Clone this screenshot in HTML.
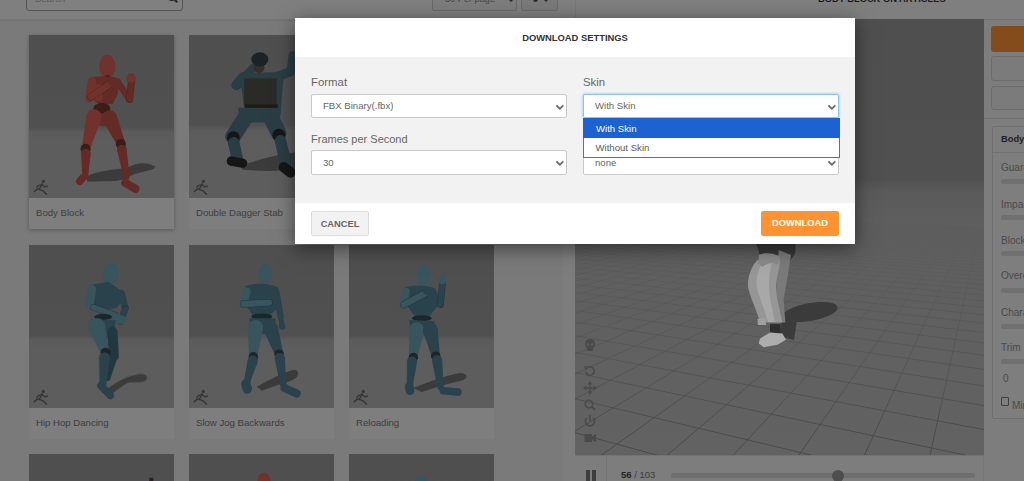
<!DOCTYPE html>
<html><head><meta charset="utf-8">
<style>
*{box-sizing:border-box;margin:0;padding:0}
html,body{width:1024px;height:481px;overflow:hidden;background:#7a7a7a;font-family:"Liberation Sans",sans-serif;position:relative}
.abs{position:absolute}
.card{position:absolute;width:145px;background:#7e7e7e}
.card .img{position:absolute;left:0;top:0;width:145px;height:163px;background:#505050;overflow:hidden}
.card .floor{position:absolute;left:0;width:145px;bottom:0;background:#5d5d5d}
.card .lbl{position:absolute;left:7px;top:172px;font-size:9.6px;color:#3d3d3d;white-space:nowrap}
#modal{left:295px;top:18px;width:560px;height:226px;background:#fff;box-shadow:0 4px 18px rgba(0,0,0,.5)}
#mhead{position:absolute;left:0;top:0;width:560px;height:39px;text-align:center;font-weight:bold;font-size:9.4px;color:#333;line-height:39px}
#mbody{position:absolute;left:0;top:39px;width:560px;height:146px;background:#f2f2f2}
.flabel{position:absolute;font-size:11.4px;color:#666}
.sel{position:absolute;height:23px;background:#fff;border:1px solid #c9c9c9;border-radius:2px;font-size:9.6px;color:#666;line-height:21px;padding-left:11px;white-space:nowrap}
.chev{position:absolute;right:3px;top:8px}
.btn{position:absolute;height:25px;border-radius:2px;font-weight:bold;font-size:9.3px;text-align:center;line-height:25px}
.rlbl{position:absolute;left:1001px;font-size:10px;color:#4a4a4a;white-space:nowrap}
.trk{position:absolute;left:1001px;width:40px;height:5px;border-radius:3px;background:#707070}
</style></head><body>
<svg width="0" height="0" style="position:absolute"><defs><filter id="blr" x="-10%" y="-10%" width="120%" height="120%"><feGaussianBlur stdDeviation="1.6"/></filter><filter id="blr2" x="-10%" y="-10%" width="120%" height="120%"><feGaussianBlur stdDeviation="0.6"/></filter></defs></svg>
<!-- header -->
<div class="abs" style="left:0;top:0;width:1024px;height:20px;background:#7f7f7f;border-bottom:1px solid #747474;box-shadow:0 1px 1px rgba(0,0,0,.05)"></div>
<div class="abs" style="left:26px;top:-9px;width:157px;height:20px;border:1px solid #555;border-radius:3px;background:#808080"></div>
<div class="abs" style="left:35px;top:-7.5px;font-size:9.5px;color:#5a5a5a">Search</div>
<svg class="abs" style="left:167px;top:-8px" width="12" height="12"><circle cx="4.5" cy="4.5" r="3.6" fill="none" stroke="#222" stroke-width="1.7"/><path d="M7.2,7.2 L10.2,10.2" stroke="#222" stroke-width="2"/></svg>
<div class="abs" style="left:432px;top:-9px;width:85px;height:20px;border:1px solid #6a6a6a;border-radius:2px;background:#7d7d7d"></div>
<div class="abs" style="left:445px;top:-6px;font-size:9.2px;color:#484848">30 Per page</div>
<div class="abs" style="left:508px;top:-1.5px;width:0;height:0;border-left:3px solid transparent;border-right:3px solid transparent;border-top:3px solid #2a2a2a"></div>
<div class="abs" style="left:521px;top:-9px;width:37px;height:20px;border:1px solid #6a6a6a;border-radius:2px;background:#7a7a7a"></div>
<div class="abs" style="left:532.5px;top:-5px;width:5px;height:7px;border-radius:50%;background:#2a2a2a"></div>
<div class="abs" style="left:543px;top:-1.5px;width:0;height:0;border-left:3px solid transparent;border-right:3px solid transparent;border-top:3px solid #2a2a2a"></div>
<div class="abs" style="left:575px;top:0;width:1px;height:19px;background:#767676"></div>
<div class="abs" style="left:818px;top:-6.5px;font-size:9.3px;font-weight:bold;color:#1a1a1a;white-space:nowrap">BODY BLOCK ON ARTICLES</div>

<!-- cards -->
<div class="card" style="left:29px;top:35px;height:194px;box-shadow:0 1px 4px rgba(0,0,0,.28);"><div class="img" style="background:linear-gradient(#4f4f4f 0px,#505050 92px,#5b5b5b 97px,#5d5d5d 106px,#5d5d5d 163px)"><svg width="145" height="163" viewBox="0 0 145 163" style="position:absolute;left:0;top:0"><g transform="scale(0.33879,0.33888)"><g filter="url(#blr)"><path d="M170,418 C200,400 250,398 290,392 C312,378 345,372 372,388 C372,398 350,400 335,404 C300,410 290,425 262,430 C230,432 205,432 172,432 Z" fill="#373737" opacity=".9"/><ellipse cx="231" cy="93" rx="24" ry="35" fill="#71322d"/><line x1="232" y1="125" x2="234" y2="138" stroke="#3a1b19" stroke-width="14" stroke-linecap="round"/><path d="M176,128 C200,118 245,120 266,130 L262,172 L248,202 L210,208 L184,186 Z" fill="#632a26"/><ellipse cx="205" cy="170" rx="22" ry="26" fill="#71322d"/><ellipse cx="237" cy="178" rx="20" ry="22" fill="#632a26"/><line x1="186" y1="136" x2="178" y2="186" stroke="#71322d" stroke-width="25" stroke-linecap="round"/><line x1="183" y1="183" x2="245" y2="141" stroke="#3a1b19" stroke-width="22" stroke-opacity=".6" stroke-linecap="round"/><line x1="183" y1="183" x2="245" y2="141" stroke="#71322d" stroke-width="19" stroke-linecap="round"/><circle cx="249" cy="138" r="14" fill="#632a26"/><line x1="262" y1="138" x2="296" y2="190" stroke="#632a26" stroke-width="19" stroke-linecap="round"/><line x1="297" y1="190" x2="303" y2="132" stroke="#3a1b19" stroke-width="21" stroke-opacity=".6" stroke-linecap="round"/><line x1="297" y1="190" x2="303" y2="132" stroke="#632a26" stroke-width="18" stroke-linecap="round"/><circle cx="301" cy="127" r="14" fill="#71322d"/><ellipse cx="215" cy="218" rx="25" ry="17" fill="#3a1b19"/><path d="M176,226 C200,232 235,232 252,230 L250,252 L222,270 L195,265 L178,246 Z" fill="#632a26"/><path d="M169.8,236.2 L157.4,322.7 L182.6,329.3 L214.2,247.8 Z" fill="#71322d"/><circle cx="192" cy="242" r="23.0" fill="#71322d"/><circle cx="170" cy="326" r="13.0" fill="#71322d"/><circle cx="167" cy="336" r="15" fill="#3a1b19"/><path d="M154.0,349.5 L157.0,411.7 L175.0,412.3 L182.0,350.5 Z" fill="#632a26"/><circle cx="168" cy="350" r="14.0" fill="#632a26"/><circle cx="166" cy="412" r="9.0" fill="#632a26"/><line x1="162" y1="418" x2="150" y2="432" stroke="#632a26" stroke-width="22" stroke-linecap="round"/><path d="M217.9,252.9 L258.1,321.3 L281.9,310.7 L258.1,235.1 Z" fill="#632a26"/><circle cx="238" cy="244" r="22.0" fill="#632a26"/><circle cx="270" cy="316" r="13.0" fill="#632a26"/><circle cx="271" cy="322" r="15" fill="#3a1b19"/><path d="M260.2,340.4 L279.1,419.6 L296.9,416.4 L287.8,335.6 Z" fill="#632a26"/><circle cx="274" cy="338" r="14.0" fill="#632a26"/><circle cx="288" cy="418" r="9.0" fill="#632a26"/><line x1="284" y1="436" x2="314" y2="454" stroke="#632a26" stroke-width="24" stroke-linecap="round"/></g></g><g stroke="#383838" stroke-width="1.5" fill="none" stroke-linecap="round" stroke-linejoin="round"><circle cx="14.3" cy="146.4" r="1.7" fill="#383838" stroke="none"/><path d="M13.3,148.8 L10.2,154.2"/><path d="M10.2,154.2 L7.8,154.6 L5.3,156.6"/><path d="M10.2,154.2 L13.8,155.6 L17.6,159.2"/><path d="M13,149.6 L16,151.8 L18.6,151.2"/><path d="M12.6,149.6 L9.2,150.6 L7.8,152.6"/></g></svg></div><div class="lbl">Body Block</div></div><div class="card" style="left:189px;top:35px;height:194px;"><div class="img" style="background:linear-gradient(#4f4f4f 0px,#505050 90px,#5b5b5b 95px,#5d5d5d 104px,#5d5d5d 163px)"><svg width="145" height="163" viewBox="0 0 145 163" style="position:absolute;left:0;top:0"><g transform="scale(0.33879,0.33888)"><g filter="url(#blr)"><path d="M150,388 C200,368 260,352 320,345 L320,398 C260,402 200,402 160,398 Z" fill="#373737" opacity=".9"/><line x1="160" y1="125" x2="140" y2="148" stroke="#293c44" stroke-width="30" stroke-linecap="round"/><line x1="140" y1="148" x2="188" y2="98" stroke="#293c44" stroke-width="24" stroke-linecap="round"/><line x1="262" y1="122" x2="300" y2="108" stroke="#293c44" stroke-width="28" stroke-linecap="round"/><line x1="300" y1="108" x2="306" y2="60" stroke="#293c44" stroke-width="24" stroke-linecap="round"/><path d="M150,112 L280,110 L270,235 L165,235 Z" fill="#293c44"/><rect x="163" y="128" width="96" height="82" fill="#2c2a26"/><circle cx="207" cy="96" r="16" fill="#352d29"/><ellipse cx="209" cy="72" rx="25" ry="21" fill="#1c2225"/><rect x="166" y="205" width="96" height="13" fill="#1b1b19"/><path d="M145,215 L272,215 L266,258 L150,258 Z" fill="#293c44"/><line x1="168" y1="240" x2="130" y2="300" stroke="#293c44" stroke-width="46" stroke-linecap="round"/><circle cx="131" cy="303" r="19" fill="#171717"/><line x1="132" y1="318" x2="142" y2="362" stroke="#293c44" stroke-width="34" stroke-linecap="round"/><line x1="125" y1="372" x2="158" y2="378" stroke="#171717" stroke-width="28" stroke-linecap="round"/><line x1="240" y1="240" x2="265" y2="290" stroke="#293c44" stroke-width="46" stroke-linecap="round"/><circle cx="265" cy="296" r="19" fill="#171717"/><line x1="270" y1="312" x2="285" y2="376" stroke="#293c44" stroke-width="34" stroke-linecap="round"/><line x1="280" y1="390" x2="300" y2="406" stroke="#171717" stroke-width="30" stroke-linecap="round"/></g></g><g stroke="#383838" stroke-width="1.5" fill="none" stroke-linecap="round" stroke-linejoin="round"><circle cx="14.3" cy="146.4" r="1.7" fill="#383838" stroke="none"/><path d="M13.3,148.8 L10.2,154.2"/><path d="M10.2,154.2 L7.8,154.6 L5.3,156.6"/><path d="M10.2,154.2 L13.8,155.6 L17.6,159.2"/><path d="M13,149.6 L16,151.8 L18.6,151.2"/><path d="M12.6,149.6 L9.2,150.6 L7.8,152.6"/></g></svg></div><div class="lbl">Double Dagger Stab</div></div><div class="card" style="left:349px;top:35px;height:194px;"><div class="img" style="background:linear-gradient(#4f4f4f 0px,#505050 90px,#5b5b5b 95px,#5d5d5d 104px,#5d5d5d 163px)"><svg width="145" height="163" viewBox="0 0 145 163" style="position:absolute;left:0;top:0"><g transform="scale(0.33879,0.33888)"></g><g stroke="#383838" stroke-width="1.5" fill="none" stroke-linecap="round" stroke-linejoin="round"><circle cx="14.3" cy="146.4" r="1.7" fill="#383838" stroke="none"/><path d="M13.3,148.8 L10.2,154.2"/><path d="M10.2,154.2 L7.8,154.6 L5.3,156.6"/><path d="M10.2,154.2 L13.8,155.6 L17.6,159.2"/><path d="M13,149.6 L16,151.8 L18.6,151.2"/><path d="M12.6,149.6 L9.2,150.6 L7.8,152.6"/></g></svg></div><div class="lbl">Body Block</div></div><div class="card" style="left:29px;top:245px;height:194px;"><div class="img" style="background:linear-gradient(#4f4f4f 0px,#505050 90px,#5b5b5b 95px,#5d5d5d 104px,#5d5d5d 163px)"><svg width="145" height="163" viewBox="0 0 145 163" style="position:absolute;left:0;top:0"><g transform="scale(0.33879,0.33888)"><g filter="url(#blr)"><path d="M222,432 C250,408 290,385 320,382 C345,376 358,392 340,402 C320,410 300,400 285,410 C268,420 250,435 238,445 Z" fill="#373737" opacity=".9"/><ellipse cx="241" cy="86" rx="22" ry="32" fill="#38545d" transform="rotate(10 241 86)"/><path d="M182,118 L234,108 L268,132 L278,162 L258,186 L209,195 L182,172 Z" fill="#2b434b"/><line x1="186" y1="130" x2="178" y2="176" stroke="#38545d" stroke-width="25" stroke-linecap="round"/><line x1="190" y1="184" x2="253" y2="206" stroke="#1b272c" stroke-width="20" stroke-opacity=".6" stroke-linecap="round"/><line x1="190" y1="184" x2="253" y2="206" stroke="#38545d" stroke-width="17" stroke-linecap="round"/><line x1="273" y1="142" x2="284" y2="186" stroke="#2b434b" stroke-width="20" stroke-linecap="round"/><line x1="284" y1="188" x2="270" y2="226" stroke="#1b272c" stroke-width="19" stroke-opacity=".6" stroke-linecap="round"/><line x1="284" y1="188" x2="270" y2="226" stroke="#2b434b" stroke-width="16" stroke-linecap="round"/><rect x="245" y="205" width="40" height="26" rx="8" fill="#38545d" transform="rotate(20 265 218)"/><ellipse cx="219" cy="212" rx="26" ry="9" fill="#1b272c"/><path d="M182,218 L255,222 L252,262 L215,282 L185,258 Z" fill="#2b434b"/><line x1="246" y1="256" x2="250" y2="328" stroke="#24383f" stroke-width="30" stroke-linecap="round"/><line x1="248" y1="335" x2="230" y2="390" stroke="#24383f" stroke-width="22" stroke-linecap="round"/><path d="M176.1,247.5 L207.6,311.2 L234.4,302.8 L223.9,232.5 Z" fill="#38545d"/><circle cx="200" cy="240" r="25.0" fill="#38545d"/><circle cx="221" cy="307" r="14.0" fill="#38545d"/><circle cx="226" cy="318" r="15" fill="#1b272c"/><path d="M207.0,330.9 L208.0,407.3 L228.0,408.7 L239.0,333.1 Z" fill="#2b434b"/><circle cx="223" cy="332" r="16.0" fill="#2b434b"/><circle cx="218" cy="408" r="10.0" fill="#2b434b"/><line x1="212" y1="415" x2="240" y2="444" stroke="#2b434b" stroke-width="22" stroke-linecap="round"/></g></g><g stroke="#383838" stroke-width="1.5" fill="none" stroke-linecap="round" stroke-linejoin="round"><circle cx="14.3" cy="146.4" r="1.7" fill="#383838" stroke="none"/><path d="M13.3,148.8 L10.2,154.2"/><path d="M10.2,154.2 L7.8,154.6 L5.3,156.6"/><path d="M10.2,154.2 L13.8,155.6 L17.6,159.2"/><path d="M13,149.6 L16,151.8 L18.6,151.2"/><path d="M12.6,149.6 L9.2,150.6 L7.8,152.6"/></g></svg></div><div class="lbl">Hip Hop Dancing</div></div><div class="card" style="left:189px;top:245px;height:194px;"><div class="img" style="background:linear-gradient(#4f4f4f 0px,#505050 90px,#5b5b5b 95px,#5d5d5d 104px,#5d5d5d 163px)"><svg width="145" height="163" viewBox="0 0 145 163" style="position:absolute;left:0;top:0"><g transform="scale(0.33879,0.33888)"><g filter="url(#blr)"><path d="M200,418 C240,396 285,372 312,368 C330,372 325,392 298,402 C265,412 235,422 215,430 Z" fill="#373737" opacity=".9"/><ellipse cx="225" cy="85" rx="20" ry="30" fill="#38545d"/><path d="M165,122 C200,110 240,112 264,126 L266,185 L232,212 L190,212 L172,182 Z" fill="#2b434b"/><line x1="170" y1="138" x2="160" y2="172" stroke="#38545d" stroke-width="24" stroke-linecap="round"/><line x1="162" y1="174" x2="236" y2="170" stroke="#1b272c" stroke-width="22" stroke-opacity=".6" stroke-linecap="round"/><line x1="162" y1="174" x2="236" y2="170" stroke="#38545d" stroke-width="19" stroke-linecap="round"/><line x1="258" y1="140" x2="270" y2="210" stroke="#2b434b" stroke-width="19" stroke-linecap="round"/><circle cx="275" cy="240" r="10" fill="#2b434b"/><line x1="270" y1="210" x2="274" y2="236" stroke="#2b434b" stroke-width="15" stroke-linecap="round"/><ellipse cx="215" cy="211" rx="31" ry="9" fill="#1b272c"/><path d="M178,216 L256,216 L252,252 L215,264 L180,248 Z" fill="#2b434b"/><path d="M173.1,242.2 L177.0,321.0 L203.0,323.0 L218.9,245.8 Z" fill="#38545d"/><circle cx="196" cy="244" r="23.0" fill="#38545d"/><circle cx="190" cy="322" r="13.0" fill="#38545d"/><circle cx="190" cy="330" r="14" fill="#1b272c"/><path d="M173.5,338.0 L162.8,397.5 L181.2,402.5 L202.5,346.0 Z" fill="#2b434b"/><circle cx="188" cy="342" r="15.0" fill="#2b434b"/><circle cx="172" cy="400" r="9.5" fill="#2b434b"/><line x1="168" y1="410" x2="172" y2="425" stroke="#2b434b" stroke-width="28" stroke-linecap="round"/><path d="M219.2,251.0 L252.7,322.2 L277.3,313.8 L260.8,237.0 Z" fill="#2b434b"/><circle cx="240" cy="244" r="22.0" fill="#2b434b"/><circle cx="265" cy="318" r="13.0" fill="#2b434b"/><circle cx="266" cy="322" r="14" fill="#1b272c"/><path d="M253.1,336.0 L268.6,411.2 L287.4,408.8 L282.9,332.0 Z" fill="#2b434b"/><circle cx="268" cy="334" r="15.0" fill="#2b434b"/><circle cx="278" cy="410" r="9.5" fill="#2b434b"/><line x1="282" y1="422" x2="318" y2="438" stroke="#2b434b" stroke-width="24" stroke-linecap="round"/></g></g><g stroke="#383838" stroke-width="1.5" fill="none" stroke-linecap="round" stroke-linejoin="round"><circle cx="14.3" cy="146.4" r="1.7" fill="#383838" stroke="none"/><path d="M13.3,148.8 L10.2,154.2"/><path d="M10.2,154.2 L7.8,154.6 L5.3,156.6"/><path d="M10.2,154.2 L13.8,155.6 L17.6,159.2"/><path d="M13,149.6 L16,151.8 L18.6,151.2"/><path d="M12.6,149.6 L9.2,150.6 L7.8,152.6"/></g></svg></div><div class="lbl">Slow Jog Backwards</div></div><div class="card" style="left:349px;top:245px;height:194px;"><div class="img" style="background:linear-gradient(#4f4f4f 0px,#505050 90px,#5b5b5b 95px,#5d5d5d 104px,#5d5d5d 163px)"><svg width="145" height="163" viewBox="0 0 145 163" style="position:absolute;left:0;top:0"><g transform="scale(0.33879,0.33888)"><g filter="url(#blr)"><path d="M190,422 C240,402 295,382 330,378 C352,380 355,396 325,402 C285,410 242,425 215,434 Z" fill="#373737" opacity=".9"/><ellipse cx="220" cy="90" rx="20" ry="30" fill="#38545d"/><path d="M163,126 C195,116 235,118 254,128 L262,180 L236,212 L195,212 L174,182 Z" fill="#2b434b"/><line x1="168" y1="138" x2="160" y2="176" stroke="#38545d" stroke-width="24" stroke-linecap="round"/><line x1="162" y1="176" x2="226" y2="142" stroke="#1b272c" stroke-width="22" stroke-opacity=".6" stroke-linecap="round"/><line x1="162" y1="176" x2="226" y2="142" stroke="#38545d" stroke-width="19" stroke-linecap="round"/><circle cx="229" cy="136" r="11" fill="#2b434b"/><line x1="250" y1="140" x2="270" y2="176" stroke="#2b434b" stroke-width="19" stroke-linecap="round"/><line x1="270" y1="176" x2="276" y2="112" stroke="#1b272c" stroke-width="20" stroke-opacity=".6" stroke-linecap="round"/><line x1="270" y1="176" x2="276" y2="112" stroke="#2b434b" stroke-width="17" stroke-linecap="round"/><circle cx="275" cy="104" r="12" fill="#38545d"/><line x1="279" y1="98" x2="283" y2="86" stroke="#38545d" stroke-width="7" stroke-linecap="round"/><ellipse cx="215" cy="216" rx="29" ry="9" fill="#1b272c"/><path d="M178,221 L252,225 L254,256 L215,266 L180,250 Z" fill="#2b434b"/><path d="M178.2,247.1 L177.1,323.3 L202.9,326.7 L221.8,252.9 Z" fill="#38545d"/><circle cx="200" cy="250" r="22.0" fill="#38545d"/><circle cx="190" cy="325" r="13.0" fill="#38545d"/><circle cx="190" cy="332" r="14" fill="#1b272c"/><path d="M171.1,342.6 L170.5,407.1 L189.5,408.9 L200.9,345.4 Z" fill="#2b434b"/><circle cx="186" cy="344" r="15.0" fill="#2b434b"/><circle cx="180" cy="408" r="9.5" fill="#2b434b"/><line x1="178" y1="418" x2="180" y2="430" stroke="#2b434b" stroke-width="26" stroke-linecap="round"/><path d="M218.5,254.5 L242.3,324.7 L267.7,319.3 L261.5,245.5 Z" fill="#2b434b"/><circle cx="240" cy="250" r="22.0" fill="#2b434b"/><circle cx="255" cy="322" r="13.0" fill="#2b434b"/><circle cx="256" cy="328" r="14" fill="#1b272c"/><path d="M245.1,341.9 L260.6,419.2 L279.4,416.8 L274.9,338.1 Z" fill="#2b434b"/><circle cx="260" cy="340" r="15.0" fill="#2b434b"/><circle cx="270" cy="418" r="9.5" fill="#2b434b"/><line x1="278" y1="430" x2="322" y2="434" stroke="#2b434b" stroke-width="22" stroke-linecap="round"/></g></g><g stroke="#383838" stroke-width="1.5" fill="none" stroke-linecap="round" stroke-linejoin="round"><circle cx="14.3" cy="146.4" r="1.7" fill="#383838" stroke="none"/><path d="M13.3,148.8 L10.2,154.2"/><path d="M10.2,154.2 L7.8,154.6 L5.3,156.6"/><path d="M10.2,154.2 L13.8,155.6 L17.6,159.2"/><path d="M13,149.6 L16,151.8 L18.6,151.2"/><path d="M12.6,149.6 L9.2,150.6 L7.8,152.6"/></g></svg></div><div class="lbl">Reloading</div></div><div class="card" style="left:29px;top:454px;height:194px;"><div class="img" style="background:linear-gradient(#4f4f4f 0px,#505050 198px,#5b5b5b 203px,#5d5d5d 212px,#5d5d5d 163px)"><svg width="145" height="163" viewBox="0 0 145 163" style="position:absolute;left:0;top:0"><g transform="scale(0.33879,0.33888)"><rect x="355" y="70" width="12" height="30" fill="#2a2020"/></g></svg></div></div><div class="card" style="left:189px;top:454px;height:194px;"><div class="img" style="background:linear-gradient(#4f4f4f 0px,#505050 198px,#5b5b5b 203px,#5d5d5d 212px,#5d5d5d 163px)"><svg width="145" height="163" viewBox="0 0 145 163" style="position:absolute;left:0;top:0"><g transform="scale(0.33879,0.33888)"><ellipse cx="221" cy="85" rx="20" ry="30" fill="#71322d"/></g></svg></div></div><div class="card" style="left:349px;top:454px;height:194px;"><div class="img" style="background:linear-gradient(#4f4f4f 0px,#505050 198px,#5b5b5b 203px,#5d5d5d 212px,#5d5d5d 163px)"><svg width="145" height="163" viewBox="0 0 145 163" style="position:absolute;left:0;top:0"><g transform="scale(0.33879,0.33888)"><ellipse cx="212" cy="92" rx="19" ry="29" fill="#38545d"/></g></svg></div></div>

<!-- right area -->
<div class="abs" style="left:563px;top:20px;width:12px;height:461px;background:#7d7d7d"></div>
<div class="abs" style="left:575px;top:19px;width:409px;height:436px;overflow:hidden"><svg width="409" height="436" viewBox="0 0 409 436" style="position:absolute;left:0;top:0">
<defs>
<linearGradient id="bgG" x1="0" y1="0" x2="0" y2="436" gradientUnits="userSpaceOnUse"><stop offset="0" stop-color="#4f4f4f"/><stop offset="0.367" stop-color="#505050"/><stop offset="0.397" stop-color="#5a5a5a"/><stop offset="0.470" stop-color="#5e5e5e"/><stop offset="1" stop-color="#626262"/></linearGradient>
<linearGradient id="lnG" x1="0" y1="0" x2="0" y2="436" gradientUnits="userSpaceOnUse"><stop offset="0.401" stop-color="#494949" stop-opacity="0"/><stop offset="0.573" stop-color="#494949" stop-opacity="0.15"/><stop offset="0.780" stop-color="#494949" stop-opacity="0.45"/><stop offset="0.963" stop-color="#494949" stop-opacity="0.95"/></linearGradient>
<clipPath id="flc"><path d="M0,158.1 L409,159.1 L409,436 L0,436 Z"/></clipPath>
</defs>
<rect width="409" height="436" fill="url(#bgG)"/>
<g clip-path="url(#flc)"><path d="M18.3,193.3L-787.2,262.4 M24.2,193.5L-784.4,264.4 M30.1,193.7L-781.4,266.5 M36.2,194.0L-778.3,268.7 M42.3,194.2L-775.1,270.9 M48.5,194.5L-771.7,273.3 M54.8,194.7L-768.3,275.7 M61.1,195.0L-764.6,278.3 M67.6,195.2L-760.8,281.0 M74.1,195.5L-756.9,283.7 M80.7,195.7L-752.7,286.7 M87.4,196.0L-748.4,289.7 M94.2,196.3L-743.9,292.9 M101.0,196.5L-739.1,296.2 M108.0,196.8L-734.1,299.7 M115.1,197.1L-728.8,303.4 M122.2,197.3L-723.3,307.3 M129.5,197.6L-717.5,311.4 M136.8,197.9L-711.3,315.7 M144.3,198.2L-704.8,320.3 M151.9,198.5L-697.9,325.2 M159.5,198.8L-690.6,330.3 M167.3,199.1L-682.8,335.7 M175.2,199.4L-674.6,341.6 M183.2,199.7L-665.7,347.8 M191.3,200.0L-656.3,354.4 M199.5,200.4L-646.2,361.5 M207.9,200.7L-635.4,369.1 M216.4,201.0L-623.7,377.3 M225.0,201.4L-611.0,386.2 M233.7,201.7L-597.4,395.8 M242.6,202.1L-582.5,406.2 M251.6,202.4L-566.3,417.6 M260.7,202.8L-548.5,430.1 M270.0,203.1L-529.0,443.8 M279.4,203.5L-507.4,459.0 M289.0,203.9L-483.3,475.9 M298.7,204.2L-456.5,494.7 M308.6,204.6L-426.3,516.0 M318.6,205.0L-392.0,540.0 M328.8,205.4L-352.9,567.5 M339.2,205.8L-307.7,599.2 M349.7,206.2L-255.0,636.3 M360.4,206.7L-192.7,680.1 M371.3,207.1L-117.8,732.6 M382.4,207.5L-26.3,796.9 M393.6,208.0L88.1,877.3 M405.1,208.4L235.4,980.8 M416.8,208.9L432.1,1118.9 M428.6,209.3L707.8,1312.6 M440.7,209.8L1122.3,1603.8 M453.0,210.3L1815.8,2091.0 M18.3,193.3L517.8,212.8 M12.4,193.8L520.2,214.0 M6.3,194.3L522.6,215.3 M0.1,194.8L525.1,216.6 M-6.3,195.4L527.8,218.0 M-13.0,196.0L530.5,219.5 M-19.8,196.5L533.5,221.0 M-26.9,197.2L536.5,222.7 M-34.1,197.8L539.8,224.4 M-41.7,198.4L543.2,226.2 M-49.5,199.1L546.8,228.1 M-57.5,199.8L550.7,230.1 M-65.9,200.5L554.7,232.3 M-74.5,201.2L559.1,234.5 M-83.5,202.0L563.7,236.9 M-92.8,202.8L568.6,239.5 M-102.5,203.6L573.8,242.3 M-112.5,204.5L579.4,245.2 M-122.9,205.4L585.4,248.4 M-133.7,206.3L591.9,251.8 M-145.0,207.3L598.9,255.5 M-156.8,208.3L606.5,259.5 M-169.0,209.4L614.7,263.8 M-181.8,210.5L623.7,268.6 M-195.2,211.6L633.5,273.7 M-209.2,212.8L644.3,279.4 M-223.8,214.1L656.2,285.7 M-239.2,215.4L669.5,292.7 M-255.3,216.8L684.3,300.5 M-272.2,218.2L700.9,309.2 M-289.9,219.7L719.7,319.1 M-308.7,221.3L741.2,330.4 M-328.4,223.0L765.9,343.5 M-349.2,224.8L794.7,358.6 M-371.3,226.7L828.7,376.5 M-394.6,228.7L869.4,398.0 M-419.4,230.8L919.0,424.1 M-445.8,233.1L980.7,456.6 M-473.8,235.5L1059.8,498.2 M-503.8,238.1L1164.5,553.4 M-535.8,240.8L1309.9,630.0 M-570.1,243.8L1525.5,743.5 M-607.1,247.0L1878.1,929.2 M-646.8,250.4L2559.2,1287.9 M-689.9,254.1L4428.1,2272.0 M-736.5,258.1L31746.0,16658.1 M-787.2,262.4L-4977.6,-2681.2 M-842.7,267.2L-2067.1,-1148.5" stroke="url(#lnG)" stroke-width="1" fill="none"/></g>
<g transform="translate(0,0)"><g filter="url(#blr2)"><ellipse cx="235" cy="293" rx="28" ry="9" fill="#3b3b3b" transform="rotate(-10 235 293)"/><path d="M207,292 L222,300 L219,321 L204,317 Z" fill="#3b3b3b"/><path d="M180,221 L221,221 L220,235 L213.6,243.5 L207.4,236 L185,236 Z" fill="#383838"/><path d="M203.7,231 L216,236 L212.4,258.4 L208.6,281 L210.4,303.4 L198.7,303.4 L201.2,278.4 L202.4,251 Z" fill="#7a7a7a"/><path d="M182.4,241 C175,248.5 171.2,263.4 173.7,271 C177.4,283.4 182.4,293.4 185,303.4 L207.4,303.4 C204.9,290.9 201.2,278.4 201.2,268.4 C201.2,258.4 204.9,248.5 204.9,241 Z" fill="#969696"/><path d="M186,246 C181,256 180,266 184,276 C188,288 191,296 193,303 L200,303 C197,288 194,276 194,266 C194,256 196,248 197,243 Z" fill="#a8a8a8"/><path d="M184,236 C190,233 200,234 205,238 L203,246 C198,243 192,244 187,248 L183,244 Z" fill="#8a8a8a"/><rect x="195" y="305" width="10" height="10" fill="#2e2e2e"/><path d="M185,319.6 L195,313.4 L207.4,314.6 L211,320.8 L202.4,325.8 L188.7,328.3 L183.7,324.6 Z" fill="#adadad"/><path d="M182.4,300 L190,299 L191.2,305.9 L183,306 Z" fill="#a0a0a0"/></g></g>
<g transform="translate(-575,-19)"><g fill="#4a4a4a"><ellipse cx="590" cy="344" rx="5" ry="5.2"/><rect x="587" y="347" width="6" height="4" rx="1"/></g><g fill="#5c5c5c"><circle cx="588" cy="344.5" r="1.3"/><circle cx="592" cy="344.5" r="1.3"/></g><path d="M587.4,367.7 A4.2,4.2 0 1 1 585.8,371.6" fill="none" stroke="#4a4a4a" stroke-width="1.6"/><path d="M584.2,365.8 L588.6,367 L585.3,370.4 Z" fill="#4a4a4a"/><path d="M590,382.5 V393.5 M584.5,388 H595.5" stroke="#4a4a4a" stroke-width="1.4"/><path d="M588,384.5 L590,382 L592,384.5 M588,391.5 L590,394 L592,391.5 M586.5,386 L584,388 L586.5,390 M593.5,386 L596,388 L593.5,390" fill="none" stroke="#4a4a4a" stroke-width="1.2"/><circle cx="589" cy="404" r="3.8" fill="none" stroke="#4a4a4a" stroke-width="1.6"/><path d="M591.8,406.8 L595,410" stroke="#4a4a4a" stroke-width="1.8"/><path d="M586.8,418 A4.6,4.6 0 1 0 593.2,418" fill="none" stroke="#4a4a4a" stroke-width="1.6"/><path d="M590,415 V421" stroke="#4a4a4a" stroke-width="1.6"/><rect x="584.5" y="434" width="7.5" height="8" fill="#4a4a4a"/><path d="M592,436.5 L596,434 V442 L592,439.5 Z" fill="#4a4a4a"/></g>
</svg></div>
<div class="abs" style="left:575px;top:455px;width:409px;height:26px;background:#7d7d7d;border-top:1px solid #727272;border-right:1px solid #747474"></div>
<div class="abs" style="left:586px;top:470px;width:4px;height:11px;background:#3e3e3e"></div>
<div class="abs" style="left:592px;top:470px;width:4px;height:11px;background:#3e3e3e"></div>
<div class="abs" style="left:606px;top:456px;width:1px;height:25px;background:#737373"></div>
<div class="abs" style="left:621px;top:469px;font-size:9.5px;color:#3a3a3a;white-space:nowrap"><b style="color:#262626">56</b> / 103</div>
<div class="abs" style="left:671px;top:473px;width:304px;height:5px;border-radius:3px;background:#6e6e6e"></div>
<div class="abs" style="left:832px;top:470px;width:12px;height:12px;border-radius:50%;background:#4e4e4e"></div>

<!-- right panel -->
<div class="abs" style="left:984px;top:20px;width:40px;height:461px;background:#7d7d7d"></div>
<div class="abs" style="left:991px;top:26px;width:40px;height:25.5px;border-radius:3px;background:#844c1a"></div>
<div class="abs" style="left:991px;top:56px;width:40px;height:24.5px;border-radius:3px;border:1px solid #6c6c6c;background:#7b7b7b"></div>
<div class="abs" style="left:991px;top:86px;width:40px;height:24px;border-radius:3px;border:1px solid #6c6c6c;background:#7b7b7b"></div>
<div class="abs" style="left:984px;top:118px;width:40px;height:1px;background:#727272"></div>
<div class="abs" style="left:992px;top:126px;width:40px;height:293px;border:1px solid #6f6f6f;border-radius:2px;background:#7e7e7e"></div>
<div class="abs" style="left:993px;top:152px;width:40px;height:1px;background:#717171"></div>
<div class="abs" style="left:1001px;top:134px;font-size:9.3px;font-weight:bold;color:#1e1e1e">Body</div>
<div class="rlbl" style="top:162px">Guard</div><div class="trk" style="top:179px"></div>
<div class="rlbl" style="top:198.5px">Impact</div><div class="trk" style="top:215px"></div>
<div class="rlbl" style="top:234.5px">Block</div><div class="trk" style="top:251px"></div>
<div class="rlbl" style="top:270px">Overexp</div><div class="trk" style="top:288px"></div>
<div class="rlbl" style="top:306.5px">Character</div><div class="trk" style="top:324px"></div>
<div class="rlbl" style="top:342px">Trim</div><div class="trk" style="top:359px"></div>
<div class="rlbl" style="top:373px;left:1003px">0</div>
<div class="abs" style="left:1001px;top:397px;width:8px;height:9px;border:1px solid #3e3e3e;border-radius:1px"></div>
<div class="rlbl" style="top:400px;left:1012px">Mirror</div>

<!-- modal -->
<div id="modal" class="abs">
  <div id="mhead">DOWNLOAD SETTINGS</div>
  <div id="mbody">
    <div class="flabel" style="left:16px;top:18.5px">Format</div>
    <div class="sel" style="left:16px;top:37px;width:256px;height:24px;line-height:22px">FBX Binary(.fbx)</div>
    <svg class="abs" style="left:260px;top:47px" width="10" height="7"><path d="M1.4,1.3 L4.9,4.7 L8.4,1.3" fill="none" stroke="#6a6a6a" stroke-width="1.7"/></svg>
    <div class="flabel" style="left:16px;top:75.5px;font-size:11px">Frames per Second</div>
    <div class="sel" style="left:16px;top:93px;width:256px;height:25px;line-height:23.5px">30</div>
    <svg class="abs" style="left:260px;top:103px" width="10" height="7"><path d="M1.4,1.3 L4.9,4.7 L8.4,1.3" fill="none" stroke="#6a6a6a" stroke-width="1.7"/></svg>
    <div class="flabel" style="left:288px;top:18.5px">Skin</div>
    <div class="sel" style="left:288px;top:37px;width:256px;height:24px;line-height:22px;border-color:#86c8e6;box-shadow:0 0 2px 1px rgba(120,190,230,.45)">With Skin</div>
    <svg class="abs" style="left:532px;top:47px" width="10" height="7"><path d="M1.4,1.3 L4.9,4.7 L8.4,1.3" fill="none" stroke="#6a6a6a" stroke-width="1.7"/></svg>
    <div class="sel" style="left:288px;top:93px;width:256px;height:25px;line-height:23.5px">none</div>
    <svg class="abs" style="left:532px;top:103px" width="10" height="7"><path d="M1.4,1.3 L4.9,4.7 L8.4,1.3" fill="none" stroke="#6a6a6a" stroke-width="1.7"/></svg>
    <div class="abs" style="left:288px;top:61px;width:257px;height:40px;border:1px solid #6f6f6f;border-top:none;background:#fff"></div>
    <div class="abs" style="left:288px;top:61px;width:257px;height:20px;background:#1c62d0"></div>
    <div class="abs" style="left:301px;top:65.5px;font-size:9.6px;color:#fff">With Skin</div>
    <div class="abs" style="left:300.5px;top:84.5px;font-size:9.6px;color:#5a5a5a">Without Skin</div>
  </div>
  <div class="btn" style="left:16px;top:193px;width:58px;background:#f2f2f2;border:1px solid #dcdcdc;color:#666">CANCEL</div>
  <div class="btn" style="left:466px;top:193px;width:78px;background:#ff9331;color:#fff">DOWNLOAD</div>
</div>
</body></html>
